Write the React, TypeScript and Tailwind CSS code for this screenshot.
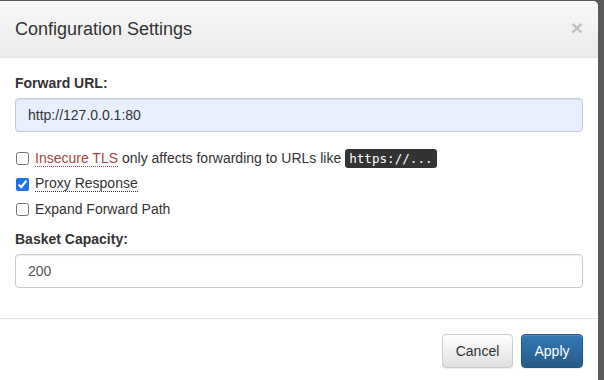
import { useState } from 'react';

const font = { fontFamily: '"Liberation Sans", Arial, sans-serif' };

function CheckRow({
  checked,
  onChange,
  children,
}: {
  checked: boolean;
  onChange: (v: boolean) => void;
  children: React.ReactNode;
}) {
  return (
    <label className="flex items-center min-h-5 text-[14px] text-[#333] cursor-pointer">
      <input
        type="checkbox"
        checked={checked}
        onChange={(e) => onChange(e.target.checked)}
        className="w-[13px] h-[13px] ml-[1px] mr-[6px] accent-[#1a73e8]"
      />
      {children}
    </label>
  );
}

export default function App() {
  const [forwardUrl, setForwardUrl] = useState('http://127.0.0.1:80');
  const [insecureTls, setInsecureTls] = useState(false);
  const [proxyResponse, setProxyResponse] = useState(true);
  const [expandPath, setExpandPath] = useState(false);
  const [capacity, setCapacity] = useState('200');

  return (
    <div className="w-[604px] h-[380px] overflow-hidden bg-[#5a5a5a] flex" style={font}>
      <div className="w-[598px] mt-px bg-white rounded-tr-[5px] flex flex-col shrink-0">
        {/* header */}
        <div className="h-[57px] px-[15px] flex items-center justify-between border-b border-[#e5e5e5] rounded-tr-[5px] bg-gradient-to-b from-[#f8f8f8] to-[#ebebeb]">
          <h4 className="text-[18px] leading-[26px] text-[#333]">Configuration Settings</h4>
          <button className="text-[21px] font-bold leading-none text-black opacity-20 -mt-[4px]">×</button>
        </div>

        {/* body */}
        <div className="px-[15px] pt-[15px] pb-[15px]">
          <div className="mb-[16px]">
            <label className="block text-[14px] font-bold leading-5 text-[#333] mb-[5px]">Forward URL:</label>
            <input
              type="text"
              value={forwardUrl}
              onChange={(e) => setForwardUrl(e.target.value)}
              className="w-full h-[34px] px-[12px] text-[14px] text-[#333] bg-[#e8f0fe] border border-[#c3cbd8] rounded-[4px] shadow-[inset_0_1px_1px_rgba(0,0,0,0.075)] outline-none"
            />
          </div>

          <div className="flex flex-col gap-[5px] mb-[10px]">
            <div className="h-[21px] flex items-center">
              <CheckRow checked={insecureTls} onChange={setInsecureTls}>
                <abbr
                  title="Skip certificate verification"
                  className="text-[#a94442] no-underline border-b border-dotted border-[#a94442] leading-[15px]"
                >
                  Insecure TLS
                </abbr>
                <span className="ml-[4px]">only affects forwarding to URLs like</span>
                <kbd
                  className="ml-[4px] px-[4px] py-[2px] text-[12.6px] leading-[15px] text-white bg-[#333] rounded-[3px]"
                  style={{ fontFamily: '"DejaVu Sans Mono", "Liberation Mono", monospace' }}
                >
                  https://...
                </kbd>
              </CheckRow>
            </div>
            <div className="h-5 flex items-center">
              <CheckRow checked={proxyResponse} onChange={setProxyResponse}>
                <abbr
                  title="Proxy the response from forward URL"
                  className="no-underline border-b border-dotted border-[#333] leading-[15px]"
                >
                  Proxy Response
                </abbr>
              </CheckRow>
            </div>
            <div className="h-5 flex items-center">
              <CheckRow checked={expandPath} onChange={setExpandPath}>
                Expand Forward Path
              </CheckRow>
            </div>
          </div>

          <div className="mb-[15px]">
            <label className="block text-[14px] font-bold leading-5 text-[#333] mb-[5px]">Basket Capacity:</label>
            <input
              type="text"
              value={capacity}
              onChange={(e) => setCapacity(e.target.value)}
              className="w-full h-[34px] px-[12px] text-[14px] text-[#555] bg-white border border-[#ccc] rounded-[4px] shadow-[inset_0_1px_1px_rgba(0,0,0,0.075)] outline-none"
            />
          </div>
        </div>

        {/* footer */}
        <div className="border-t border-[#e5e5e5] px-[15px] pt-[15px] flex justify-end gap-[8px]">
          <button className="w-[71px] h-[34px] text-[14px] text-[#333] border border-[#ccc] rounded-[4px] bg-gradient-to-b from-white to-[#e0e0e0] shadow-[inset_0_1px_0_rgba(255,255,255,0.15),0_1px_1px_rgba(0,0,0,0.075)]">
            Cancel
          </button>
          <button className="w-[62px] h-[34px] text-[14px] text-white border border-[#245580] rounded-[4px] bg-gradient-to-b from-[#337ab7] to-[#265a88] shadow-[inset_0_1px_0_rgba(255,255,255,0.15),0_1px_1px_rgba(0,0,0,0.075)]">
            Apply
          </button>
        </div>
      </div>
    </div>
  );
}
